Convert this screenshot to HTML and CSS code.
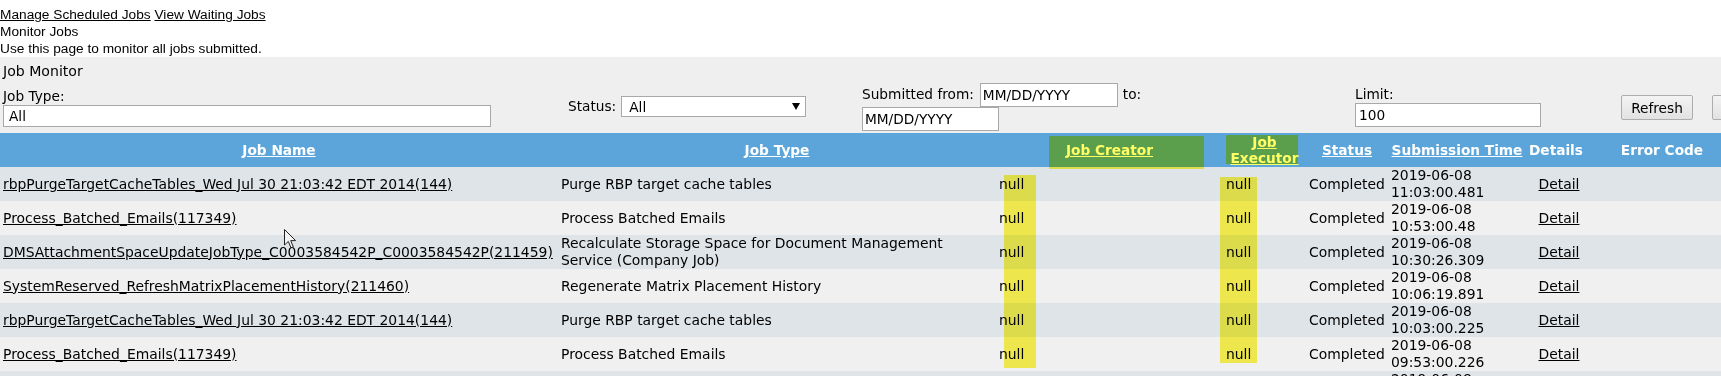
FILE: index.html
```html
<!DOCTYPE html>
<html lang="en">
<head>
<meta charset="utf-8">
<title>Monitor Jobs</title>
<link rel="stylesheet" href="styles.css">
</head>
<body>
<div class="top">
  <div><a href="#">Manage Scheduled Jobs</a> <a href="#">View Waiting Jobs</a></div>
  <div>Monitor Jobs</div>
  <div>Use this page to monitor all jobs submitted.</div>
</div>

<div class="panel">
  <div class="title">Job Monitor</div>
  <div class="fields">
    <div class="cell c-type">
      <div class="lbl">Job Type:</div>
      <input class="inp inp-type" type="text" value="All">
    </div>
    <div class="cell c-status">
      <span class="lbl">Status:</span>
      <span class="sel-wrap"><select class="sel"><option>All</option></select><span class="sel-arrow"></span></span>
    </div>
    <div class="cell c-date">
      <div class="date-row">
        <span class="lbl">Submitted from:</span>
        <input class="inp inp-date1" type="text" value="MM/DD/YYYY">
        <span class="lbl to">to:</span>
      </div>
      <input class="inp inp-date2" type="text" value="MM/DD/YYYY">
    </div>
    <div class="cell c-limit">
      <div class="lbl">Limit:</div>
      <input class="inp inp-limit" type="text" value="100">
    </div>
    <div class="cell c-btns">
      <button class="btn" type="button">Refresh</button>
      <button class="btn btn-2" type="button">Cancel</button>
    </div>
  </div>
</div>

<div class="grid-wrap">
  <table class="jobs">
    <colgroup>
      <col class="w-name"><col class="w-type"><col class="w-creator"><col class="w-exec">
      <col class="w-status"><col class="w-time"><col class="w-details"><col class="w-err">
    </colgroup>
    <thead>
      <tr>
        <th><a href="#">Job Name</a></th>
        <th><a href="#">Job Type</a></th>
        <th class="th-creator"><a href="#" class="hl-link">Job Creator</a></th>
        <th class="th-exec"><a href="#" class="hl-link">Job Executor</a></th>
        <th><a href="#">Status</a></th>
        <th><a href="#">Submission Time</a></th>
        <th>Details</th>
        <th>Error Code</th>
      </tr>
    </thead>
    <tbody>
      <tr class="odd">
        <td><a href="#">rbpPurgeTargetCacheTables_Wed Jul 30 21:03:42 EDT 2014(144)</a></td>
        <td>Purge RBP target cache tables</td>
        <td>null</td><td>null</td><td>Completed</td>
        <td>2019-06-08<br>11:03:00.481</td>
        <td class="ctr"><a href="#">Detail</a></td><td></td>
      </tr>
      <tr class="even">
        <td><a href="#">Process_Batched_Emails(117349)</a></td>
        <td>Process Batched Emails</td>
        <td>null</td><td>null</td><td>Completed</td>
        <td>2019-06-08<br>10:53:00.48</td>
        <td class="ctr"><a href="#">Detail</a></td><td></td>
      </tr>
      <tr class="odd">
        <td><a href="#">DMSAttachmentSpaceUpdateJobType_C0003584542P_C0003584542P(211459)</a></td>
        <td><span class="jt-wrap">Recalculate Storage Space for Document Management Service (Company Job)</span></td>
        <td>null</td><td>null</td><td>Completed</td>
        <td>2019-06-08<br>10:30:26.309</td>
        <td class="ctr"><a href="#">Detail</a></td><td></td>
      </tr>
      <tr class="even">
        <td><a href="#">SystemReserved_RefreshMatrixPlacementHistory(211460)</a></td>
        <td>Regenerate Matrix Placement History</td>
        <td>null</td><td>null</td><td>Completed</td>
        <td>2019-06-08<br>10:06:19.891</td>
        <td class="ctr"><a href="#">Detail</a></td><td></td>
      </tr>
      <tr class="odd">
        <td><a href="#">rbpPurgeTargetCacheTables_Wed Jul 30 21:03:42 EDT 2014(144)</a></td>
        <td>Purge RBP target cache tables</td>
        <td>null</td><td>null</td><td>Completed</td>
        <td>2019-06-08<br>10:03:00.225</td>
        <td class="ctr"><a href="#">Detail</a></td><td></td>
      </tr>
      <tr class="even">
        <td><a href="#">Process_Batched_Emails(117349)</a></td>
        <td>Process Batched Emails</td>
        <td>null</td><td>null</td><td>Completed</td>
        <td>2019-06-08<br>09:53:00.226</td>
        <td class="ctr"><a href="#">Detail</a></td><td></td>
      </tr>
      <tr class="odd">
        <td><a href="#">SystemReserved_RefreshMatrixPlacementHistory(211460)</a></td>
        <td>Regenerate Matrix Placement History</td>
        <td>null</td><td>null</td><td>Completed</td>
        <td>2019-06-08<br>09:43:00.117</td>
        <td class="ctr"><a href="#">Detail</a></td><td></td>
      </tr>
    </tbody>
  </table>
  <span class="hl hl-creator"></span>
  <span class="hl hl-exec"></span>
</div>

<svg class="cursor" width="13" height="20" viewBox="0 0 13 20" aria-hidden="true">
  <path d="M0.5 0.5 L0.5 16 L4.3 12.4 L7 18.8 L9.3 17.8 L6.7 11.6 L11.6 11.6 Z" fill="#f4f4f4" stroke="#222" stroke-width="1" stroke-linejoin="miter"/>
</svg>
</body>
</html>
```
FILE: styles.css
```css
html, body {
  margin: 0;
  padding: 0;
  overflow: hidden;
  background: #ffffff;
}

body {
  width: 1721px;
  height: 376px;
  font-family: "DejaVu Sans", Verdana, sans-serif;
  font-size: 13.7px;
  color: #000;
}

/* ---------- top text ---------- */
.top {
  padding-top: 6px;
  font-family: "Liberation Sans", Arial, sans-serif;
  font-size: 13.7px;
  line-height: 17px;
  color: #000;
}
.top a {
  color: #000;
  text-decoration: underline;
}

/* ---------- filter panel ---------- */
.panel {
  background: #efefef;
  width: 1740px;
}
.title {
  padding: 5px 0 0 3px;
  line-height: 18px;
  font-size: 14.1px;
}
.fields {
  display: flex;
  align-items: center;
  height: 53px;
}
.cell {
  box-sizing: border-box;
  flex: none;
}
.lbl {
  line-height: 17px;
}
.c-type {
  width: 568px;
  padding-left: 3px;
  padding-top: 2px;
}
.c-status {
  width: 294px;
  display: flex;
  align-items: center;
}
.c-date {
  width: 493px;
  display: flex;
  flex-direction: column;
  align-items: flex-start;
}
.date-row {
  display: flex;
  align-items: center;
}
.c-limit {
  width: 266px;
}
.c-btns {
  display: flex;
  align-items: center;
  padding-top: 2px;
}

.inp {
  display: block;
  box-sizing: border-box;
  margin: 0;
  border: 1px solid #a9a9a9;
  border-radius: 0;
  background: #fff;
  font-family: "DejaVu Sans", Verdana, sans-serif;
  font-size: 13.7px;
  color: #000;
  padding: 0 2px;
  outline: none;
}
.inp-type {
  width: 488px;
  height: 22px;
  padding-left: 5px;
}
.inp-date1 {
  width: 138px;
  height: 24px;
  margin-left: 6px;
}
.to {
  margin-left: 5px;
}
.inp-date2 {
  width: 137px;
  height: 24px;
}
.inp-limit {
  width: 186px;
  height: 24px;
  padding-left: 3px;
}

.sel-wrap {
  position: relative;
  display: inline-block;
  margin-left: 5px;
}
.sel {
  display: block;
  appearance: none;
  -webkit-appearance: none;
  box-sizing: border-box;
  width: 185px;
  height: 21px;
  margin: 0;
  border: 1px solid #a9a9a9;
  border-radius: 0;
  background: #fff;
  font-family: "DejaVu Sans", Verdana, sans-serif;
  font-size: 13.7px;
  color: #000;
  padding: 0 0 0 7px;
  outline: none;
}
.sel-arrow {
  position: absolute;
  right: 6px;
  top: 7px;
  width: 0;
  height: 0;
  border-left: 4px solid transparent;
  border-right: 4px solid transparent;
  border-top: 7px solid #000;
  pointer-events: none;
}

.btn {
  box-sizing: border-box;
  height: 25px;
  width: 72px;
  margin: 0;
  padding: 0;
  border: 1px solid #adadad;
  border-radius: 2px;
  background: linear-gradient(#f3f3f3, #e2e2e2);
  font-family: "DejaVu Sans", Verdana, sans-serif;
  font-size: 13.7px;
  color: #000;
}
.btn-2 {
  margin-left: 19px;
}

/* ---------- jobs table ---------- */
.grid-wrap {
  position: relative;
  width: 1740px;
}
.jobs {
  border-collapse: collapse;
  table-layout: fixed;
  width: 1740px;
  font-size: 13.7px;
}
.w-name { width: 558px; }
.w-type { width: 438px; }
.w-creator { width: 227px; }
.w-exec { width: 83px; }
.w-status { width: 82px; }
.w-time { width: 138px; }
.w-details { width: 58px; }
.w-err { width: 156px; }

.jobs th {
  height: 34px;
  padding: 0 3px;
  background: #5ca5db;
  color: #fff;
  font-weight: bold;
  text-align: center;
  vertical-align: middle;
  line-height: 16px;
}
.jobs th a {
  color: #fff;
  text-decoration: underline;
}
.jobs th.th-creator,
.jobs th.th-exec {
  position: relative;
}
.jobs th a.hl-link {
  position: relative;
  z-index: 1;
  color: #ffff66;
}
.th-creator::before {
  content: "";
  position: absolute;
  left: 53px;
  top: 3px;
  width: 155px;
  height: 31px;
  background: #5b9e4b;
  border-bottom: 2px solid #dedb4f;
  z-index: 0;
}
.th-exec::before {
  content: "";
  position: absolute;
  left: 3px;
  top: 2px;
  width: 72px;
  height: 29px;
  background: #5b9e4b;
  z-index: 0;
}

.jobs td {
  height: 34px;
  padding: 0 3px;
  font-size: 13.9px;
  line-height: 17px;
  vertical-align: middle;
  text-align: left;
  color: #000;
  white-space: nowrap;
  overflow: hidden;
}
.jobs td a {
  color: #000;
  text-decoration: underline;
}
.jobs td.ctr {
  text-align: center;
  padding-left: 8px;
  padding-right: 0;
}
.jt-wrap {
  display: inline-block;
  max-width: 400px;
  white-space: normal;
  vertical-align: middle;
}
.jobs tr.odd td {
  background: #dfe4e8;
}
.jobs tr.even td {
  background: #f0f0f0;
}

/* highlighter marks over the null columns */
.hl {
  position: absolute;
  background: #fcf552;
  mix-blend-mode: multiply;
  pointer-events: none;
}
.hl-creator {
  left: 1004px;
  top: 42px;
  width: 32px;
  height: 193px;
}
.hl-exec {
  left: 1220px;
  top: 44px;
  width: 37px;
  height: 186px;
}

/* mouse pointer captured in the screenshot */
.cursor {
  position: absolute;
  left: 284px;
  top: 229px;
}
```
